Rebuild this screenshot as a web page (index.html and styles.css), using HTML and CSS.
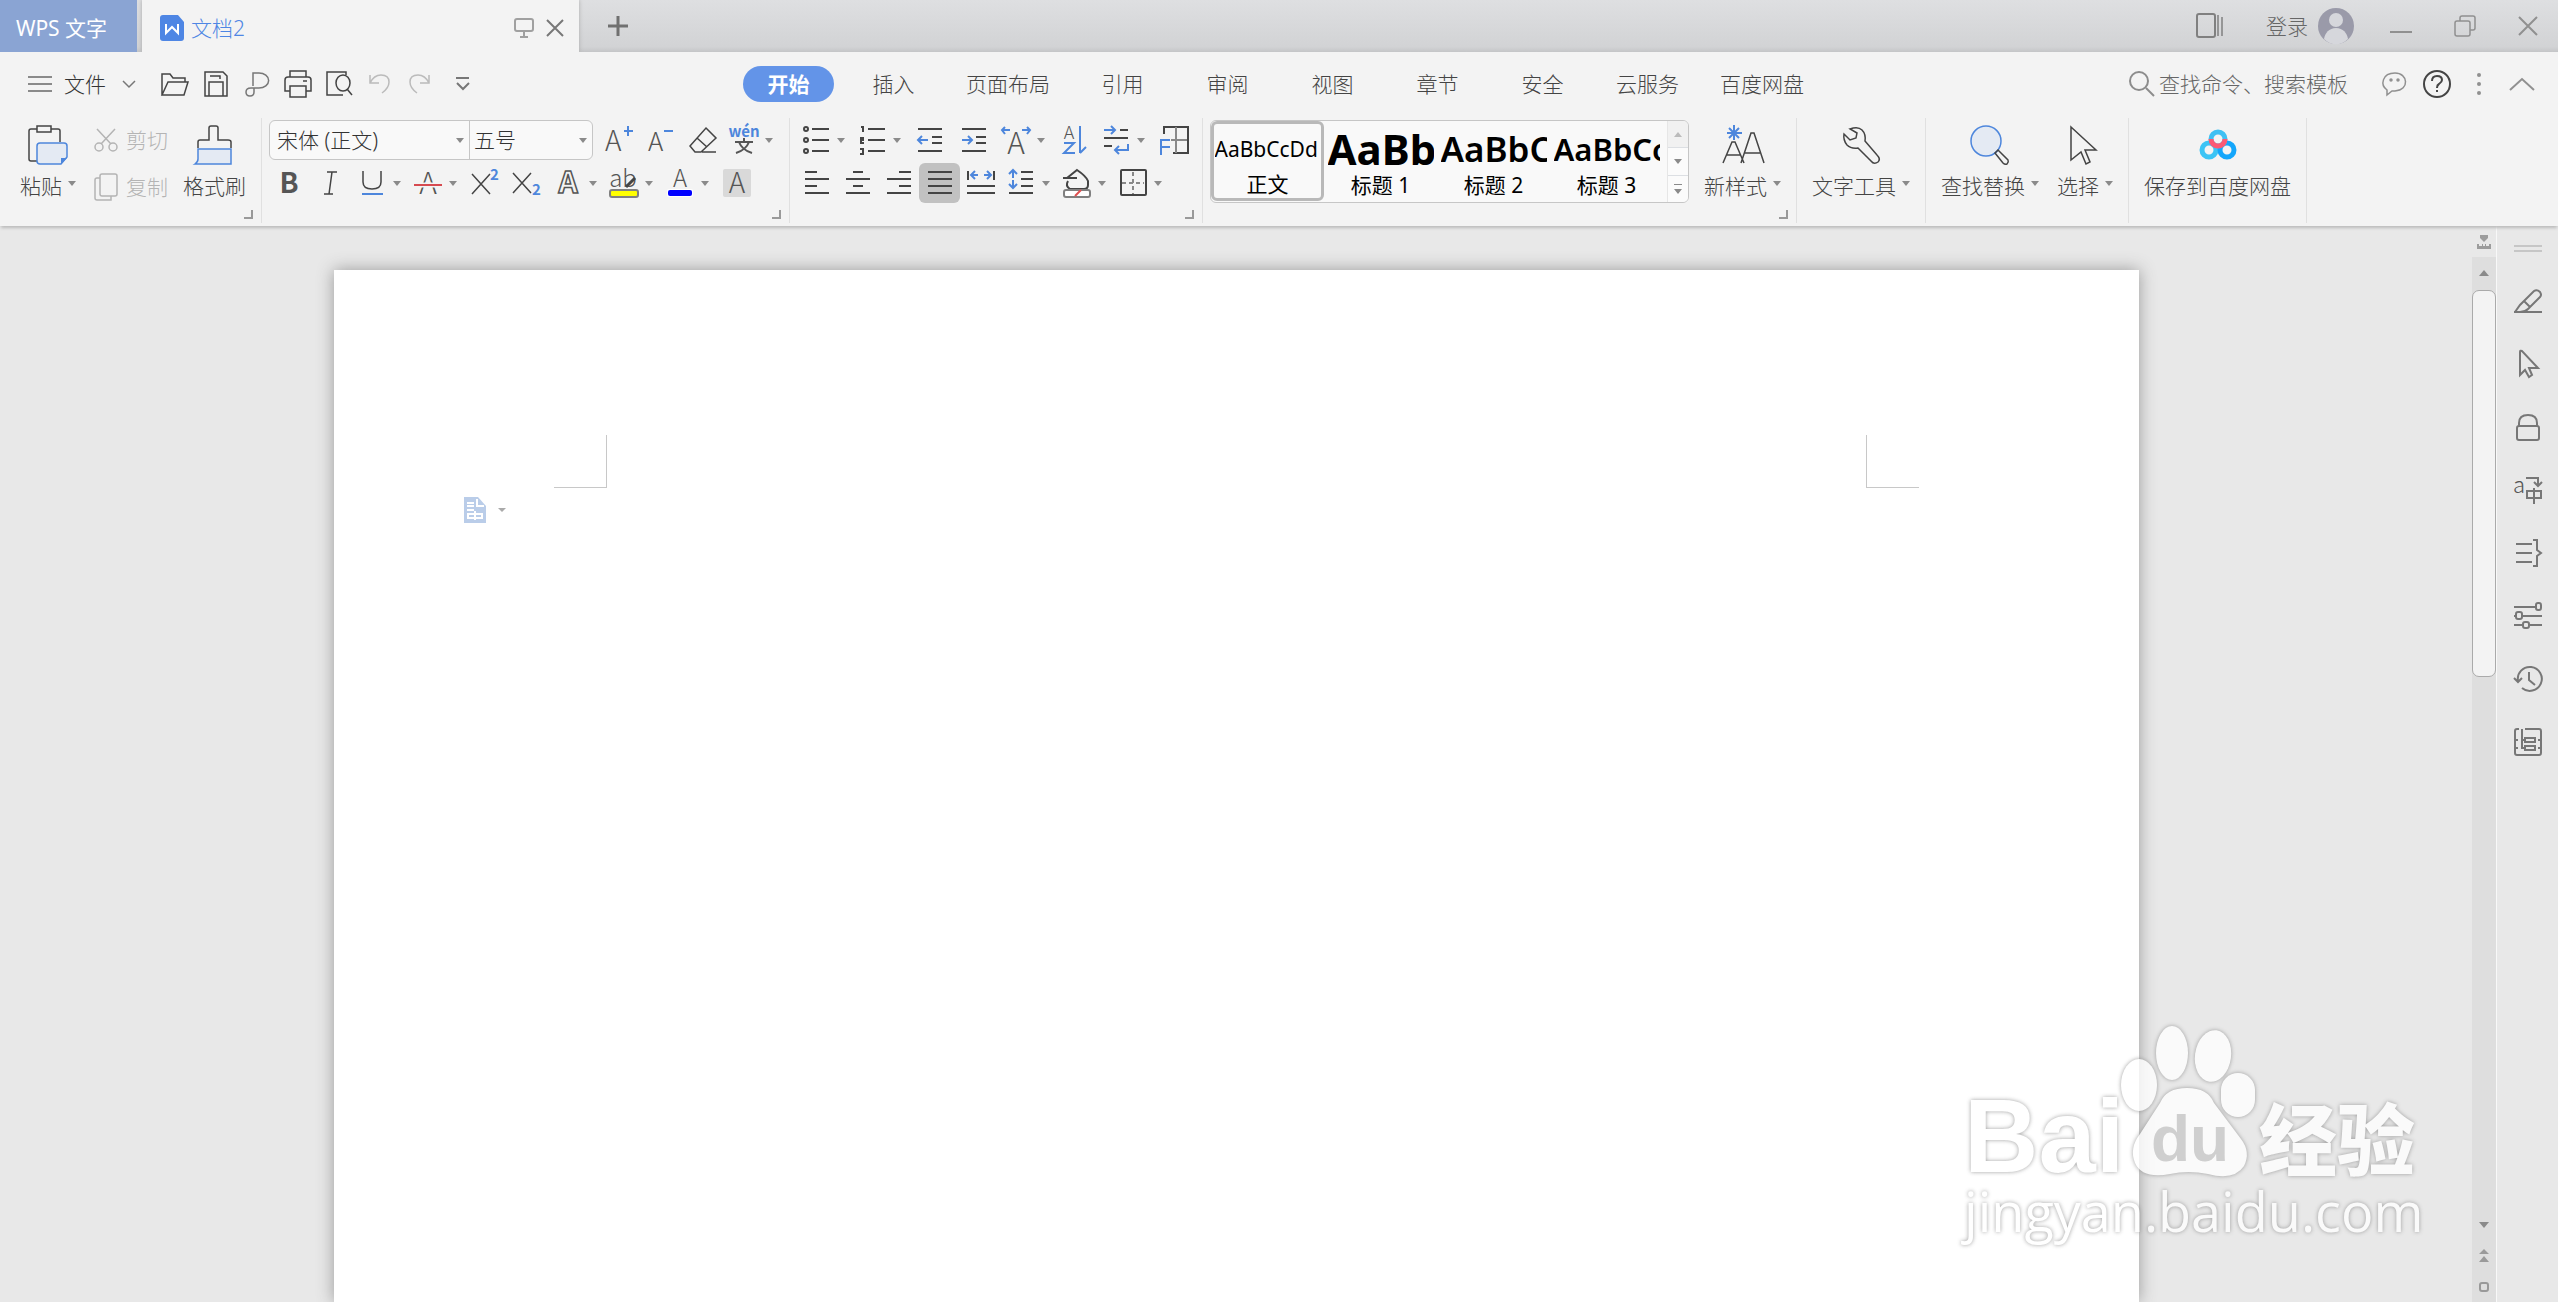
FILE: index.html
```html
<!DOCTYPE html>
<html lang="zh-CN">
<head>
<meta charset="utf-8">
<title>WPS 文字 - 文档2</title>
<link rel="stylesheet" href="styles.css">
</head>
<body>
<svg class="defs" aria-hidden="true">
  <symbol id="arr" viewBox="0 0 10 6"><path d="M0 0h10L5 6z" fill="#8a8a8a"/></symbol>
</svg>

<header class="titlebar">
  <button class="home-tab">WPS 文字</button>
  <div class="doc-tab">
    <svg class="doc-icon" width="24" height="26" viewBox="0 0 24 26"><path d="M3 0h15l6 7v16a3 3 0 0 1-3 3H3a3 3 0 0 1-3-3V3a3 3 0 0 1 3-3z" fill="#4e86e4"/><path d="M6 9v9l6-6 6 6V9" fill="none" stroke="#fff" stroke-width="2"/></svg>
    <span class="doc-name">文档2</span>
    <button class="plain" aria-label="演示"><svg width="20" height="20" viewBox="0 0 20 20" fill="none" stroke="#a0a0a0" stroke-width="2"><rect x="1" y="1" width="18" height="12" rx="2"/><path d="M10 13v5M6 19h8"/></svg></button>
    <button class="plain" aria-label="关闭文档"><svg width="18" height="18" viewBox="0 0 18 18" stroke="#777" stroke-width="2"><path d="M1 1l16 16M17 1L1 17"/></svg></button>
  </div>
  <button class="plain add" aria-label="新建"><svg width="22" height="22" viewBox="0 0 22 22" stroke="#707070" stroke-width="3"><path d="M11 1v20M1 11h20"/></svg></button>
  <div class="window-tools">
    <button class="plain" aria-label="窗口列表"><svg width="28" height="26" viewBox="0 0 28 26" fill="none" stroke="#808080" stroke-width="2"><rect x="1" y="1" width="18" height="23" rx="2"/><path d="M22 2v21M26 4v19" stroke-width="1.5"/></svg></button>
    <button class="plain login">登录
      <svg width="36" height="36" viewBox="0 0 36 36"><circle cx="18" cy="18" r="18" fill="#9a9aa9"/><circle cx="18" cy="12" r="7" fill="#d6d7dc"/><path d="M6 31c1-6 5-11 12-11s11 5 12 11c-7 7-17 7-24 0z" fill="#d6d7dc"/></svg></button>
    <button class="plain" aria-label="最小化"><svg width="22" height="22" viewBox="0 0 22 22" stroke="#909090" stroke-width="2"><path d="M0 17h22"/></svg></button>
    <button class="plain" aria-label="还原"><svg width="22" height="22" viewBox="0 0 22 22" fill="none" stroke="#909090" stroke-width="1.5"><rect x="1" y="6" width="15" height="15" rx="2"/><path d="M6 6V3q0-2 2-2h11q2 0 2 2v10q0 2-2 2h-3"/></svg></button>
    <button class="plain" aria-label="关闭"><svg width="20" height="20" viewBox="0 0 20 20" stroke="#909090" stroke-width="2"><path d="M1 1l18 18M19 1L1 19"/></svg></button>
  </div>
</header>

<div class="menubar">
  <div class="quick">
    <button class="plain file"><svg width="24" height="18" viewBox="0 0 24 18" stroke="#8a8a8a" stroke-width="2"><path d="M0 2h24M0 9h24M0 16h24"/></svg>文件<svg width="14" height="8" viewBox="0 0 14 8" fill="none" stroke="#777" stroke-width="1.5"><path d="M1 1l6 6 6-6"/></svg></button>
    <button class="plain" aria-label="打开"><svg width="28" height="26" viewBox="0 0 28 26" class="line"><path d="M1 24V3h8l3 4h12v4M1 24L7 11h20l-4 13z"/></svg></button>
    <button class="plain" aria-label="保存"><svg width="28" height="26" viewBox="0 0 28 26" class="line"><path d="M3 1h18l4 4v20H3zM7 25V11h14v14M8 5h10v3"/></svg></button>
    <button class="plain soft" aria-label="输出为PDF"><svg width="28" height="26" viewBox="0 0 28 26" class="line"><path d="M10 15V2h6a9 7 0 0 1 0 15H8q-5 0-5 4t4 4 4-4v-4"/></svg></button>
    <button class="plain" aria-label="打印"><svg width="28" height="28" viewBox="0 0 28 28" class="line"><path d="M6 7V1h16v6M6 21H1V10q0-3 3-3h20q3 0 3 3v11h-5M6 16h16v11H6zM19 11h4"/></svg></button>
    <button class="plain" aria-label="打印预览"><svg width="28" height="26" viewBox="0 0 28 26" class="line"><path d="M21 4V1H2v23h16"/><ellipse cx="18" cy="12" rx="7" ry="8"/><path d="M22 18l5 6"/></svg></button>
    <button class="plain off" aria-label="撤销"><svg width="28" height="22" viewBox="-2 0 28 22" class="line"><path d="M2 2v8h9M2 10Q6 2 13 2q8 0 8 7 0 6-7 11"/></svg></button>
    <button class="plain off" aria-label="恢复"><svg width="28" height="22" viewBox="-2 0 28 22" class="line"><path d="M20 2v8h-9M20 10Q16 2 9 2 1 2 1 9q0 6 7 11"/></svg></button>
    <button class="plain" aria-label="更多"><svg width="28" height="14" viewBox="0 0 28 14" fill="none" stroke="#777" stroke-width="2"><path d="M8 1h13M9 6l6 6 6-6"/></svg></button>
  </div>
  <nav class="tabs">
    <button class="tab on"><span>开始</span></button>
    <button class="tab">插入</button>
    <button class="tab">页面布局</button>
    <button class="tab">引用</button>
    <button class="tab">审阅</button>
    <button class="tab">视图</button>
    <button class="tab">章节</button>
    <button class="tab">安全</button>
    <button class="tab">云服务</button>
    <button class="tab">百度网盘</button>
  </nav>
  <label class="search">
    <svg width="26" height="26" viewBox="0 0 26 26" fill="none" stroke="#8c8c8c" stroke-width="2"><circle cx="10" cy="10" r="9"/><path d="M17 17l8 8"/></svg>
    <input type="text" placeholder="查找命令、搜索模板" aria-label="查找命令、搜索模板">
  </label>
  <div class="help">
    <button class="plain" aria-label="反馈"><svg width="26" height="26" viewBox="0 0 26 26" fill="none" stroke="#909090" stroke-width="1.5"><path d="M5 24v-5C-2 14 0 2 13 2s15 17 0 18H10z"/><circle cx="9" cy="9" r="1" fill="#909090"/><circle cx="16" cy="9" r="1" fill="#909090"/></svg></button>
    <button class="plain" aria-label="帮助"><svg width="28" height="28" viewBox="0 0 28 28" fill="none" stroke="#444" stroke-width="2"><circle cx="14" cy="14" r="13"/><path d="M9 11q0-5 5-5t5 4q0 2-3 4-2 1-2 4M14 20v2"/></svg></button>
    <button class="plain" aria-label="选项"><svg width="14" height="24" viewBox="0 0 14 24" fill="#909090"><circle cx="7" cy="3" r="2"/><circle cx="7" cy="12" r="2"/><circle cx="7" cy="21" r="2"/></svg></button>
    <button class="plain" aria-label="收起功能区"><svg width="26" height="14" viewBox="0 0 26 14" fill="none" stroke="#909090" stroke-width="2"><path d="M1 13L13 2l12 11"/></svg></button>
  </div>
</div>

<div class="ribbon">
  <section class="group clip">
    <button class="big"><svg width="40" height="40" viewBox="0 0 40 40" class="line"><path d="M9 4H3Q1 4 1 6v28q0 2 2 2h6M23 4h7q2 0 2 2v11"/><path d="M9 7V1h14v6z"/><path d="M12 18h24q3 0 3 3v11l-6 7H12q-3 0-3-3V21q0-3 3-3z" fill="#e4eaf3" stroke="#4d86dc"/><path d="M33 39v-6h6z" fill="#4d86dc" stroke="none"/></svg><span class="lbl">粘贴<svg class="arr"><use href="#arr"/></svg></span></button>
    <div class="stack">
      <button class="small"><svg width="24" height="24" viewBox="0 0 24 24" class="line"><path d="M3 1l14 15M21 1L7 16"/><circle cx="5" cy="19" r="4"/><circle cx="19" cy="19" r="4"/></svg>剪切</button>
      <button class="small"><svg width="24" height="28" viewBox="0 0 24 28" class="line"><rect x="6" y="1" width="17" height="22" rx="2"/><path d="M6 5H3Q1 5 1 7v18q0 2 2 2h14v-4"/></svg>复制</button>
    </div>
    <button class="big"><svg width="40" height="40" viewBox="0 0 40 40" class="line"><path d="M3 23v-6q0-2 2-2h9V3q0-2 2-2h5q2 0 2 2v12h10q3 0 3 2v6"/><path d="M3 24h33v15H0q3-2 3-5z" fill="#e4eaf3" stroke="#4d86dc"/></svg><span class="lbl">格式刷</span></button>
    <i class="corner"></i>
  </section>

  <section class="group font">
    <div class="row">
      <div class="combo">
        <select class="face" aria-label="字体"><option>宋体 (正文)</option></select>
        <select class="size" aria-label="字号"><option>五号</option></select>
      </div>
      <button class="ib" aria-label="增大字号"><svg class="ic" viewBox="0 0 30 30"><text x="1" y="26" class="t28">A</text><path d="M20 6h9M24 1v10" class="bl"/></svg></button>
      <button class="ib" aria-label="减小字号"><svg class="ic" viewBox="0 0 30 30"><text x="2" y="26" class="t26">A</text><path d="M18 6h9" class="bl"/></svg></button>
      <button class="ib" aria-label="清除格式"><svg class="ic line" viewBox="0 0 30 30"><path d="M18 3l10 10-15 14H7l-5-6zM9 13l10 9M14 27h14"/></svg></button>
      <button class="ib drop" aria-label="拼音指南"><svg class="ic" viewBox="0 0 30 30"><text x="15" y="12" class="t15 b m" fill="#4d86dc">wén</text><path d="M15 13v3M6 17h18M10 17q3 8 13 11M20 17q-3 8-13 11" fill="none" stroke="#555" stroke-width="2"/></svg><svg class="arr"><use href="#arr"/></svg></button>
    </div>
    <div class="row">
      <button class="ib" aria-label="加粗"><svg class="ic" viewBox="0 0 30 30"><text x="15" y="25" class="t28 b m">B</text></svg></button>
      <button class="ib" aria-label="倾斜"><svg class="ic line" viewBox="0 0 30 30"><path d="M11 4h10M16 4l-3 22M8 26h9"/></svg></button>
      <button class="ib drop" aria-label="下划线"><svg class="ic line" viewBox="0 0 30 30"><path d="M6 3v11q0 7 9 7t9-7V3"/><path d="M5 26h21" class="bl"/></svg><svg class="arr"><use href="#arr"/></svg></button>
      <button class="ib drop" aria-label="删除线"><svg class="ic" viewBox="0 0 30 30"><text x="15" y="26" class="t30 m">A</text><path d="M1 17h28" stroke="#f3f3f3" stroke-width="5"/><path d="M1 17h28" stroke="#d64a50" stroke-width="2"/></svg><svg class="arr"><use href="#arr"/></svg></button>
      <button class="ib" aria-label="上标"><svg class="ic line" viewBox="0 0 30 30"><path d="M2 6l18 20M20 6L2 26"/><text x="20" y="12" class="t15 b" fill="#4d86dc">2</text></svg></button>
      <button class="ib" aria-label="下标"><svg class="ic line" viewBox="0 0 30 30"><path d="M1 5l18 20M19 5L1 25"/><text x="20" y="27" class="t15 b" fill="#4d86dc">2</text></svg></button>
      <button class="ib drop" aria-label="文字效果"><svg class="ic" viewBox="0 0 30 30"><text x="15" y="25" class="t30 b m" fill="#f3f3f3">A</text></svg><svg class="arr"><use href="#arr"/></svg></button>
      <button class="ib drop" aria-label="突出显示"><svg class="ic" viewBox="0 0 30 30"><text x="14" y="19" class="t24 m">ab</text><path d="M17 19l9-9" stroke="#444" stroke-width="3"/><rect x="1" y="22" width="28" height="7" rx="2" fill="#ff0" stroke="#808080" stroke-width="2"/></svg><svg class="arr"><use href="#arr"/></svg></button>
      <button class="ib drop" aria-label="字体颜色"><svg class="ic" viewBox="0 0 30 30"><text x="15" y="19" class="t24 m">A</text><rect x="2" y="21" width="26" height="8" rx="2" fill="#fff"/><rect x="3" y="22" width="24" height="6" rx="2" fill="#00f"/></svg><svg class="arr"><use href="#arr"/></svg></button>
      <button class="ib" aria-label="字符底纹"><svg class="ic" viewBox="0 0 30 30"><rect x="1" y="1" width="28" height="28" rx="2" fill="#d9d9d9"/><text x="15" y="25" class="t28 m">A</text></svg></button>
    </div>
    <i class="corner"></i>
  </section>

  <section class="group para">
    <div class="row wide">
      <button class="ib drop" aria-label="项目符号"><svg class="ic line" viewBox="0 0 30 30"><path d="M11 4h17M11 15h17M11 26h17"/><circle cx="5" cy="4" r="2"/><circle cx="5" cy="15" r="2"/><circle cx="5" cy="26" r="2"/></svg><svg class="arr"><use href="#arr"/></svg></button>
      <button class="ib drop" aria-label="编号"><svg class="ic line" viewBox="0 0 30 30"><path d="M11 4h17M11 15h17M11 26h17"/><path d="M4 2h2v5M3 13h3v2H4v3h3M3 24h3v5H3"/></svg><svg class="arr"><use href="#arr"/></svg></button>
      <button class="ib" aria-label="减少缩进"><svg class="ic line" viewBox="0 0 30 30"><path d="M3 4h24M17 12h10M17 18h10M3 26h24"/><path d="M3 15h10M7 11l-4 4 4 4" class="bl"/></svg></button>
      <button class="ib" aria-label="增加缩进"><svg class="ic line" viewBox="0 0 30 30"><path d="M3 4h24M17 12h10M17 18h10M3 26h24"/><path d="M3 15h10M9 11l4 4-4 4" class="bl"/></svg></button>
      <button class="ib drop" aria-label="中文版式"><svg class="ic line" viewBox="0 0 30 30"><text x="15" y="29" class="t30 m">A</text><path d="M1 5h8M4 2L1 5l3 4M21 5h8M26 2l3 3-3 4" class="bl"/></svg><svg class="arr"><use href="#arr"/></svg></button>
      <button class="ib" aria-label="排序"><svg class="ic" viewBox="0 0 30 30"><text x="10" y="14" class="t18 m">A</text><path d="M5 18h10L5 28h11" class="bl"/><path d="M21 1v27M21 28l6-6" class="bl"/></svg></button>
      <button class="ib drop" aria-label="显示段落标记"><svg class="ic line" viewBox="0 0 30 30"><path d="M19 5h8M3 13h24M3 21h8"/><path d="M3 5h11M10 1l4 4-4 4M27 19v6H14M18 21l-4 4 4 4" class="bl"/></svg><svg class="arr"><use href="#arr"/></svg></button>
      <button class="ib" aria-label="制表位"><svg class="ic line" viewBox="0 0 30 30"><path d="M5 9V2h24v26H14"/><path d="M17 2v26M12 15h16" stroke="#888"/><path d="M2 30V15h9M2 22h9" class="bl"/></svg></button>
    </div>
    <div class="row">
      <button class="ib" aria-label="左对齐"><svg class="ic line" viewBox="0 0 30 30"><path d="M3 4h12M3 11h24M3 18h12M3 25h24"/></svg></button>
      <button class="ib" aria-label="居中对齐"><svg class="ic line" viewBox="0 0 30 30"><path d="M10 4h10M3 11h24M10 18h10M3 25h24"/></svg></button>
      <button class="ib" aria-label="右对齐"><svg class="ic line" viewBox="0 0 30 30"><path d="M15 4h12M3 11h24M15 18h12M3 25h24"/></svg></button>
      <button class="ib sel" aria-label="两端对齐"><svg class="ic line" viewBox="0 0 30 30"><path d="M3 4h24M3 11h24M3 18h24M3 25h24"/></svg></button>
      <button class="ib" aria-label="分散对齐"><svg class="ic line" viewBox="0 0 30 30"><path d="M2 3v9M28 3v9M1 18h28M1 25h28"/><path d="M5 7h7M9 3L5 7l4 4M18 7h7M21 3l4 4-4 4" class="bl"/></svg></button>
      <button class="ib drop" aria-label="行距"><svg class="ic line" viewBox="0 0 30 30"><path d="M15 4h12M15 11h12M15 18h12M3 25h24"/><path d="M7 2v8M3 6l4-4 4 4M7 12v8M3 16l4 4 4-4" class="bl"/></svg><svg class="arr"><use href="#arr"/></svg></button>
      <button class="ib drop" aria-label="底纹颜色"><svg class="ic line" viewBox="0 0 30 30"><path d="M1 10h14M5 10L15 2q9 6 11 11v4q0 4-4 4H8q-5-3-2-8"/><rect x="2" y="22" width="26" height="7" rx="2" fill="#fff" stroke="#808080"/><path d="M13 28l6-6" stroke="#e05050"/></svg><svg class="arr"><use href="#arr"/></svg></button>
      <button class="ib drop" aria-label="边框"><svg class="ic line" viewBox="0 0 30 30"><rect x="3" y="2" width="25" height="25" rx="1"/><path d="M15 4v22M4 15h22" stroke-dasharray="4 3" stroke="#888"/></svg><svg class="arr"><use href="#arr"/></svg></button>
    </div>
    <i class="corner"></i>
  </section>

  <section class="group styles">
    <div class="gallery">
      <button class="style cur"><span class="s0">AaBbCcDd</span><span>正文</span></button>
      <button class="style"><span class="s1">AaBb</span><span>标题 1</span></button>
      <button class="style"><span class="s2">AaBbC</span><span>标题 2</span></button>
      <button class="style"><span class="s3">AaBbCc</span><span>标题 3</span></button>
      <div class="spin">
        <button aria-label="上一行"><svg width="8" height="5" viewBox="0 0 10 6"><path d="M0 6h10L5 0z" fill="#bbb"/></svg></button>
        <button aria-label="下一行"><svg class="arr"><use href="#arr"/></svg></button>
        <button aria-label="展开样式"><svg width="8" height="10" viewBox="0 0 8 10"><path d="M0 0h8v1H0zM0 5h8l-4 5z" fill="#8a8a8a"/></svg></button>
      </div>
    </div>
    <button class="big"><svg width="44" height="40" viewBox="0 0 44 40" class="line"><path d="M2 38l9-21h3l9 21M5 30h14M20 38L30 8h3l10 30M23 28h16"/><path d="M13 0v15M6 8h15M8 3l10 10M18 3L8 13" class="bl"/></svg><span class="lbl">新样式<svg class="arr"><use href="#arr"/></svg></span></button>
    <i class="corner"></i>
  </section>

  <section class="group">
    <button class="big"><svg width="40" height="40" viewBox="0 0 40 40" class="line"><path d="M9 4q8-3 12 1 4 4 3 11l12 14q4 4 1 7-4 3-7-1L17 23q-7 1-11-3-4-5-3-11l6 6 6-2 1-5z"/></svg><span class="lbl">文字工具<svg class="arr"><use href="#arr"/></svg></span></button>
  </section>

  <section class="group edit">
    <button class="big"><svg width="40" height="40" viewBox="0 0 40 40" class="line"><circle cx="16" cy="16" r="15" fill="#e4eaf3" stroke="#4d86dc"/><path d="M25 28l3-3 10 10q1 2-1 4-2 1-4-1z"/></svg><span class="lbl">查找替换<svg class="arr"><use href="#arr"/></svg></span></button>
    <button class="big"><svg width="40" height="40" viewBox="0 0 40 40" class="line"><path d="M6 2l25 23H20l5 12-4 2-5-12-10 8z"/></svg><span class="lbl">选择<svg class="arr"><use href="#arr"/></svg></span></button>
  </section>

  <section class="group">
    <button class="big"><svg width="40" height="40" viewBox="0 0 40 40" fill="none" stroke-width="5"><circle cx="11" cy="25" r="7" stroke="#3cc4f5"/><circle cx="29" cy="25" r="7" stroke="#14a6fb"/><circle cx="20" cy="14" r="7" stroke="#3fc0f3"/><path d="M13 14a7 7 0 0 0 14 0" stroke="#fb5a74"/></svg><span class="lbl">保存到百度网盘</span></button>
  </section>
</div>

<div class="work">
  <main class="canvas">
    <article class="page">
      <div class="marks"><i class="mk l"></i><i class="mk r"></i></div>
      <button class="plain para-tool" aria-label="段落布局"><svg width="22" height="26" viewBox="0 0 22 26"><path d="M0 0h14l8 9v17H0z" fill="#bacde9"/><path d="M3 6h7M3 9h7M3 13h7M13 2v7h7M4 17h14v4H4zM11 14v9" fill="none" stroke="#fff" stroke-width="2"/></svg><svg width="8" height="4" viewBox="0 0 8 4"><path d="M0 0h8L4 4z" fill="#aaa"/></svg></button>
    </article>
  </main>
  <div class="scroll">
    <button class="ruler" aria-label="标尺"><svg width="14" height="14" viewBox="0 0 14 14" fill="#9c9c9c"><path d="M3 0h8v3l-4 4-4-4zM0 9h2v2h3V9h1v2h2V9h1v2h3V9h2v5H0z"/></svg></button>
    <div class="track">
      <button aria-label="向上"><svg width="10" height="6" viewBox="0 0 10 6"><path d="M0 6h10L5 0z" fill="#8a8a8a"/></svg></button>
      <div class="thumb"></div>
      <div class="ends">
        <button aria-label="向下"><svg class="sa"><use href="#arr"/></svg></button>
        <button aria-label="上一页"><svg width="10" height="13" viewBox="0 0 10 13"><path d="M0 5h10L5 0zM0 13h10L5 7z" fill="#9a9a9a"/></svg></button>
        <button aria-label="选择浏览对象"><svg width="10" height="10" viewBox="0 0 10 10" fill="none" stroke="#999" stroke-width="2"><rect x="1" y="1" width="8" height="8" rx="2"/></svg></button>
      </div>
    </div>
  </div>
  <aside class="side">
    <i class="grip"></i>
    <button aria-label="编辑"><svg class="line" viewBox="0 0 28 28"><path d="M1 25L6 18 20 4q3-2 6 1 2 3 0 5L14 22q-3 3-8 3M10 14l6 6M0 25h28"/></svg></button>
    <button aria-label="选择"><svg class="line" viewBox="0 0 28 28"><path d="M6 2v23l5-5 4 7 3-2-3-7h9L8 1q-2-1-2 1z"/></svg></button>
    <button aria-label="保护"><svg class="line" viewBox="0 0 28 28"><rect x="3" y="13" width="22" height="14" rx="2"/><path d="M5 13v-3q0-8 9-8t9 8v3"/></svg></button>
    <button aria-label="翻译"><svg class="line" viewBox="0 0 28 28"><text x="-1" y="17" class="t22">a</text><path d="M12 2h12v7M20 6l4 4 4-4M13 15h14v7H13zM20 12v16"/></svg></button>
    <button aria-label="段落"><svg class="line" viewBox="0 0 28 28"><path d="M2 5h16M2 14h16M2 23h16M19 1h4v10l4 3-4 3v10h-4"/></svg></button>
    <button aria-label="属性"><svg class="line" viewBox="0 0 28 28"><path d="M0 5h21M0 14h2M8 14h20M0 23h9M15 23h13"/><rect x="22" y="1" width="5" height="7" rx="2"/><rect x="2" y="10" width="6" height="7" rx="2"/><rect x="9" y="20" width="6" height="6" rx="2"/></svg></button>
    <button aria-label="历史"><svg class="line" viewBox="0 0 28 28"><path d="M4 16a12 12 0 1 1 4 7M0 13l4 4 4-4M15 7v8l6 5"/></svg></button>
    <button aria-label="导航"><svg class="line" viewBox="0 0 28 28"><path d="M5 1H3Q1 1 1 3v22q0 2 2 2h22q2 0 2-2V3q0-2-2-2H11M8 1v19h3M8 12h3M1 12h3M1 20h3M24 12h3M24 20h3"/><rect x="11" y="10" width="10" height="4"/><rect x="11" y="18" width="10" height="4"/></svg></button>
  </aside>
  <svg class="mark" width="480" height="240" viewBox="0 0 480 240">
    <g class="ink">
      <text x="12" y="150" class="wm-bai">Bai</text>
      <ellipse cx="187" cy="63" rx="18" ry="26"/><ellipse cx="220" cy="31" rx="16" ry="27"/><ellipse cx="261" cy="34" rx="18" ry="26" transform="rotate(8 261 34)"/><rect x="269" y="51" width="34" height="44" rx="17"/>
      <path d="M208 81q6-15 27-15t27 15l27 36q10 13 3 27-10 15-36 8-20-4-38 0-28 5-35-11-6-15 5-29z"/>
      <text x="307" y="148" class="wm-cn">经验</text>
      <text x="12" y="210" class="wm-url">jingyan.baidu.com</text>
    </g>
    <text x="199" y="139" class="wm-du">du</text>
  </svg>
</div>
</body>
</html>
```
FILE: styles.css
```css
* { box-sizing: border-box; }
body {
  margin: 0;
  height: 100vh;
  display: flex;
  flex-direction: column;
  overflow: hidden;
  background: #f3f3f3;
  color: #444;
  font: 300 21px/26px "Noto Sans", "Noto Sans CJK SC", sans-serif;
}
button, input, select { font: inherit; color: inherit; background: none; border: 0; padding: 0; margin: 0; }
svg { display: block; flex: none; overflow: visible; }
.defs { position: absolute; width: 0; height: 0; }
.plain { display: flex; align-items: center; justify-content: center; }
.line { fill: none; stroke: currentColor; stroke-width: 1.5; }
.para .line { stroke-width: 2; }
.bl { fill: none; stroke: #4d86dc; stroke-width: 2; }
svg text { stroke: none; fill: #555; font-family: "Noto Sans CJK SC", sans-serif; }
svg text[fill="#4d86dc"] { fill: #4d86dc; }
svg text[fill="#f3f3f3"] { fill: #f3f3f3; stroke: #555; stroke-width: 1.5; }
.m { text-anchor: middle; }
.b { font-weight: 700; }
.t15 { font-size: 15px; }
.t18 { font-size: 18px; }
.t22 { font-size: 22px; }
.t24 { font-size: 24px; }
.t26 { font-size: 26px; }
.t28 { font-size: 28px; }
.t30 { font-size: 30px; }

/* title bar */
.titlebar {
  flex: none;
  height: 52px;
  display: flex;
  background: linear-gradient(#dedfe1, #d2d3d5 90%, #c4c5c7);
}
.home-tab { width: 137px; padding-right: 14px; background: #8aa4d3; color: #fff; font-weight: 400; }
.doc-tab {
  width: 437px;
  margin-left: 5px;
  padding: 0 15px 0 18px;
  display: flex;
  align-items: center;
  gap: 12px;
  background: #f3f3f3;
  box-shadow: 0 0 4px #aaa;
  clip-path: inset(0 -5px);
}
.home-tab, .doc-name { padding-top: 4px; }
.doc-icon { margin: 4px -5px 0 0; }
.doc-tab .plain { padding-top: 4px; }
.doc-name { flex: 1; color: #4e86e4; }
.add { width: 77px; }
.window-tools { margin-left: auto; margin-right: 20px; display: flex; gap: 42px; color: #666; }
.login { gap: 10px; }
.login + .plain { margin-left: -6px; }

/* menu row */
.menubar { flex: none; height: 64px; display: flex; align-items: center; }
.quick { width: 736px; padding-left: 28px; display: flex; gap: 13px; }
.file { gap: 12px; margin-right: 12px; color: #333; }
.file svg:last-child { margin-left: 4px; }
.soft { color: #777; }
.off { color: #bbb; }
.tabs { display: flex; align-items: center; }
.tab { min-width: 105px; padding: 0 20px; height: 36px; }
.tab.on { padding: 0 7px; color: #fff; font-weight: 700; }
.tab.on span { display: block; line-height: 36px; border-radius: 18px; background: #6394e8; }
.search { margin-left: auto; display: flex; align-items: center; gap: 4px; color: #666; }
.search input { width: 203px; outline: 0; }
.search input::placeholder { color: #666; opacity: 1; }
.help { margin: 0 23px 0 20px; display: flex; align-items: center; gap: 15px; }
.help .plain:nth-child(3) { margin: 0 8px 0 6px; }

/* ribbon */
.ribbon {
  flex: none;
  height: 110px;
  padding: 2px 0 3px;
  display: flex;
  position: relative;
  z-index: 1;
  background: #f3f3f3;
  box-shadow: 0 3px 3px -1px #bbb;
}
.group { position: relative; display: flex; padding: 0 15px; border-right: 1px solid #e0e0e0; }
.corner {
  position: absolute;
  right: 8px;
  bottom: 4px;
  width: 9px;
  height: 9px;
  border: solid #999;
  border-width: 0 2px 2px 0;
}
.big { display: flex; flex-direction: column; align-items: center; gap: 8px; padding-top: 7px; }
.lbl { display: flex; white-space: nowrap; }
.lbl .arr { margin: 8px 0 0 6px; }
.arr { width: 8px; height: 5px; }
.sa { width: 10px; height: 6px; }
.clip { padding: 0 15px 0 20px; }
.stack { margin: 8px 15px 0 18px; display: flex; flex-direction: column; gap: 20px; color: #b4b4b4; }
.small { display: flex; align-items: center; gap: 8px; height: 27px; }
.font, .para { flex-direction: column; gap: 3px; padding: 2px 6px; }
.font { padding-right: 9px; }
.row { display: flex; height: 40px; }
.ib { width: 41px; display: flex; align-items: center; justify-content: center; }
.font .ib { width: 42px; }
.wide .ib { width: 44px; }
.ib.drop, .font .ib.drop, .wide .ib.drop { width: 56px; padding-left: 5px; justify-content: flex-start; gap: 6px; }
.ib.sel { background: #c1c1c1; border-radius: 6px; }
.ic { width: 30px; height: 30px; }
.combo { width: 324px; margin: 0 5px 0 1px; display: flex; border: 1px solid #c6c6c6; border-radius: 6px; background: #f9f9f9; }
.combo select {
  appearance: none;
  outline: 0;
  padding: 0 7px;
  color: #333;
  background: url("data:image/svg+xml,%3Csvg xmlns='http://www.w3.org/2000/svg' width='8' height='5'%3E%3Cpath d='M0 0h8L4 5z' fill='%238a8a8a'/%3E%3C/svg%3E") no-repeat right 5px center;
}
.face { width: 200px; border-right: 1px solid #c6c6c6; }
.combo .size { flex: 1; padding-left: 4px; }

.styles { padding-left: 7px; }
.gallery {
  width: 479px;
  height: 83px;
  margin: 2px 15px 0 0;
  display: flex;
  border: 1px solid #c6c6c6;
  border-radius: 6px;
  background: #f9f9f9;
  overflow: hidden;
}
.style { width: 113px; padding: 4px; display: flex; flex-direction: column; align-items: center; color: #000; font-weight: 400; }
.style.cur { height: 80px; padding: 1px; border: 3px solid #b9b9b9; border-radius: 6px; }
.style span:first-child { width: 106px; height: 48px; line-height: 48px; overflow: hidden; text-align: left; white-space: nowrap; }
.s0 { font-size: 21px; font-weight: 400; }
.s1 { font-size: 42px; font-weight: 700; }
.s2 { font-size: 35px; font-weight: 600; }
.s3 { font-size: 31px; font-weight: 600; }
.spin { margin-left: auto; width: 21px; display: flex; flex-direction: column; border-left: 1px solid #e6e6e6; }
.spin button { flex: 1; display: flex; align-items: center; justify-content: center; background: #fbfbfb; }
.spin button:first-child { background: #f1f1f1; }
.spin button + button { border-top: 1px solid #dcdfe3; }
.edit { gap: 18px; }

/* workspace */
.work { flex: 1; min-height: 0; display: flex; position: relative; background: #e8e8e8; overflow: hidden; }
.canvas { flex: 1; padding: 44px 333px 0 334px; }
.page { height: 100%; padding: 165px 220px 0; background: #fff; box-shadow: 0 0 16px #999; }
.marks { display: flex; justify-content: space-between; }
.mk { width: 53px; height: 53px; border: 0 solid #c8c8c8; border-bottom-width: 1px; }
.mk.l { border-right-width: 1px; }
.mk.r { border-left-width: 1px; }
.para-tool { gap: 12px; margin: 9px 0 0 -90px; }
.scroll { width: 25px; display: flex; flex-direction: column; border-right: 1px solid #f8f8f8; }
.scroll button { width: 100%; height: 31px; display: flex; align-items: center; justify-content: center; }
.track { flex: 1; display: flex; flex-direction: column; background: #dedede; }
.thumb { flex: 0 0 37%; margin-top: 2px; border: 1px solid #aaa; border-radius: 7px; background: #f3f3f3; }
.ends { margin-top: auto; }
.side { width: 61px; padding-top: 19px; display: flex; flex-direction: column; align-items: center; gap: 35px; color: #777; }
.grip { width: 28px; height: 7px; border: solid #c6c6c6; border-width: 2px 0; }
.side svg { width: 28px; height: 28px; stroke-width: 2; }
.mark { position: absolute; right: 126px; bottom: 40px; }
.ink { opacity: .8; filter: drop-shadow(0 0 2px #888); }
.ink, .mark .ink text { fill: #fff; }
.mark .wm-bai { font: 700 103px "Liberation Sans", sans-serif; }
.mark .wm-cn { font: 900 78px "Noto Sans CJK SC", sans-serif; }
.mark .wm-url { font: 400 54px "Open Sans", sans-serif; }
.mark .wm-du { font: 700 64px "Liberation Sans", sans-serif; fill: #cfcfcf; }
```
